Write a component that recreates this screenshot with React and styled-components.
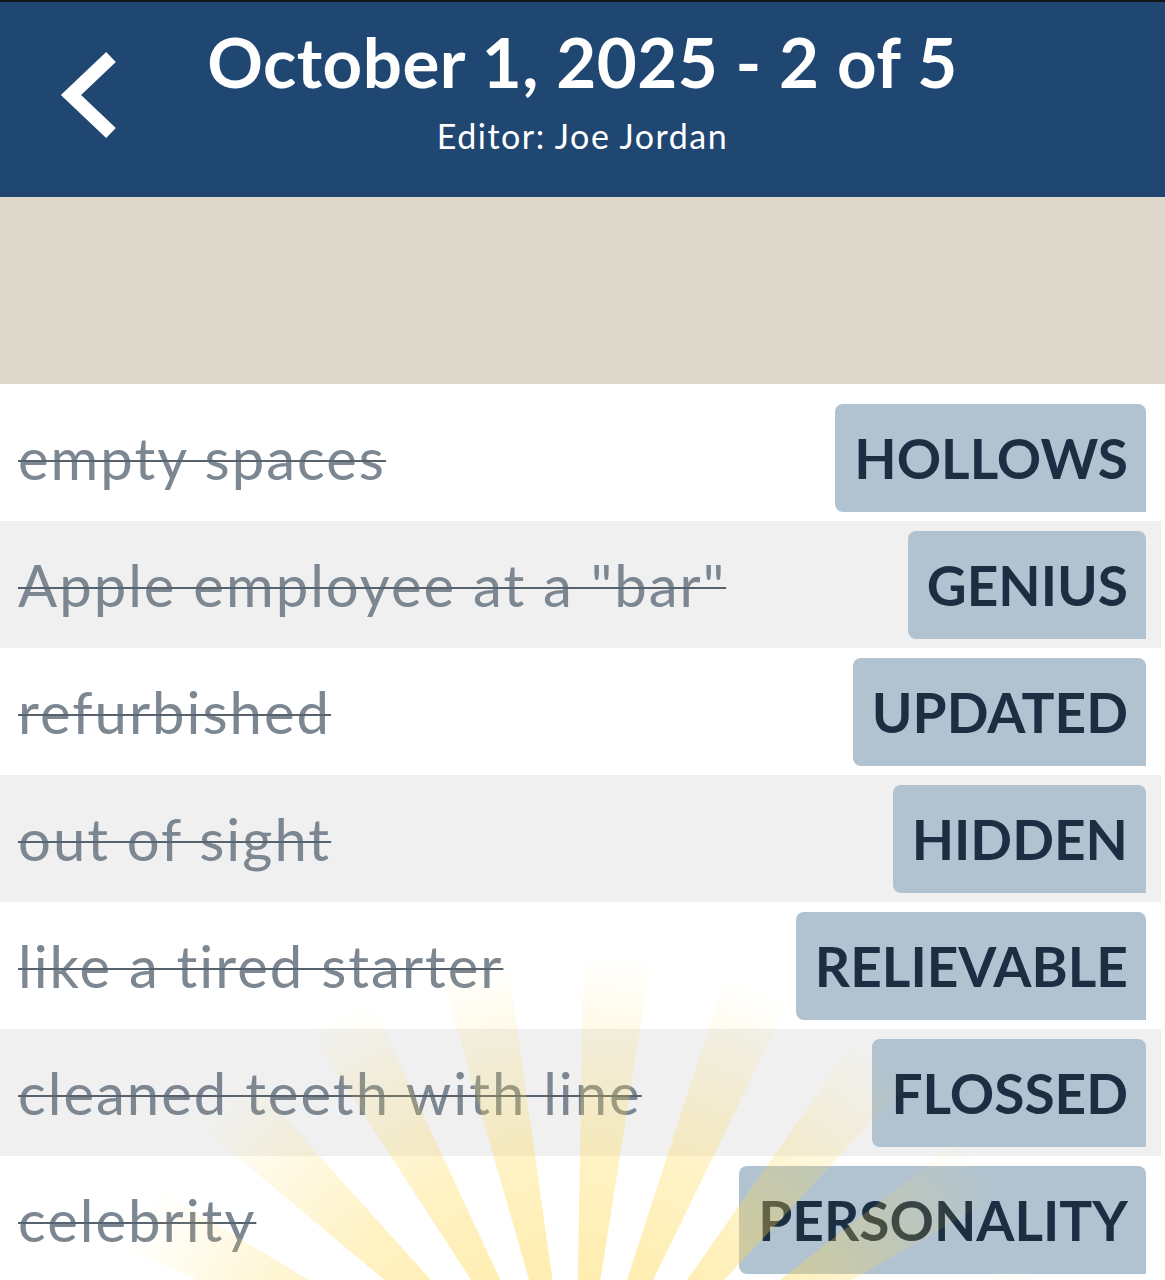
import React from "react";
import styled, { createGlobalStyle } from "styled-components";

const GlobalStyle = createGlobalStyle`
  html, body {
    margin: 0;
    padding: 0;
    background: #ffffff;
  }
  body {
    font-family: "Lato", "Noto Sans", sans-serif;
  }
`;

const Page = styled.main`
  position: relative;
  width: 1165px;
  height: 1280px;
  overflow: hidden;
  background: #ffffff;
`;

const Header = styled.header`
  display: grid;
  grid-template-columns: 1fr auto 1fr;
  align-items: start;
  height: 195px;
  border-top: 2px solid #141414;
  background: #1f4771;
  color: #ffffff;
`;

const BackButton = styled.button`
  justify-self: start;
  margin: 48px 0 0 58px;
  padding: 0;
  border: 0;
  background: none;
  cursor: pointer;
  line-height: 0;
`;

const TitleBlock = styled.div`
  display: flex;
  flex-direction: column;
  align-items: center;
`;

const Title = styled.h1`
  margin: 19px 0 0;
  font-size: 69px;
  font-weight: 700;
  line-height: 82px;
  letter-spacing: 0.5px;
`;

const Subtitle = styled.div`
  margin-top: 14px;
  font-size: 34px;
  font-weight: 400;
  line-height: 38px;
  letter-spacing: 1.5px;
`;

const Band = styled.div`
  height: 187px;
  background: #dfd8cc;
`;

const List = styled.ul`
  list-style: none;
  margin: 0;
  padding: 10px 4px 0 0;
`;

const Row = styled.li`
  display: flex;
  align-items: center;
  justify-content: space-between;
  height: 127px;
  padding: 0 15px 0 18px;
  box-sizing: border-box;
  background: ${(p) => (p.$shaded ? "#f0f0f0" : "#ffffff")};
`;

const Clue = styled.span`
  font-size: 58px;
  font-weight: 400;
  letter-spacing: 2px;
  color: #7c8792;
  text-decoration: line-through;
  text-decoration-color: #56626e;
  text-decoration-thickness: 2px;
  white-space: nowrap;
`;

const Answer = styled.span`
  display: flex;
  align-items: center;
  height: 108px;
  padding: 0 18px 0 19px;
  border-radius: 8px 8px 0 8px;
  background: #b1c3d0;
  color: #1b2e42;
  font-size: 55px;
  font-weight: 700;
`;

const Rays = styled.svg`
  position: absolute;
  left: 0;
  bottom: 0;
  width: 1165px;
  height: 420px;
  pointer-events: none;
`;

const entries = [
  ["empty spaces", "HOLLOWS"],
  ['Apple employee at a "bar"', "GENIUS"],
  ["refurbished", "UPDATED"],
  ["out of sight", "HIDDEN"],
  ["like a tired starter", "RELIEVABLE"],
  ["cleaned teeth with line", "FLOSSED"],
  ["celebrity", "PERSONALITY"],
];

// sunburst wedges fanning up from below the bottom edge
const CX = 575;
const CY = 580;
const rayPaths = (() => {
  const out = [];
  for (let a = -174; a <= -6; a += 17) {
    const a1 = (a * Math.PI) / 180;
    const a2 = ((a + 8) * Math.PI) / 180;
    const r = 900;
    out.push(
      `M${CX},${CY} L${CX + r * Math.cos(a1)},${CY + r * Math.sin(a1)} L${
        CX + r * Math.cos(a2)
      },${CY + r * Math.sin(a2)} Z`
    );
  }
  return out;
})();

const Sunburst = () => (
  <Rays viewBox="0 0 1165 420">
    <defs>
      <radialGradient id="rayFade" gradientUnits="userSpaceOnUse" cx={CX} cy={CY} r="490">
        <stop offset="0" stopColor="#ffd84d" stopOpacity="0.6" />
        <stop offset="0.6" stopColor="#ffd84d" stopOpacity="0.32" />
        <stop offset="1" stopColor="#ffd84d" stopOpacity="0" />
      </radialGradient>
    </defs>
    {rayPaths.map((d, i) => (
      <path key={i} d={d} fill="url(#rayFade)" />
    ))}
  </Rays>
);

const App = () => (
  <Page>
    <GlobalStyle />
    <Header>
      <BackButton aria-label="Back">
        <svg width="64" height="90" viewBox="0 0 64 90">
          <polyline
            points="53,7 13,45 53,83"
            fill="none"
            stroke="#ffffff"
            strokeWidth="14"
            strokeLinejoin="miter"
          />
        </svg>
      </BackButton>
      <TitleBlock>
        <Title>October 1, 2025 - 2 of 5</Title>
        <Subtitle>Editor: Joe Jordan</Subtitle>
      </TitleBlock>
      <div />
    </Header>
    <Band />
    <List>
      {entries.map(([clue, answer], i) => (
        <Row key={answer} $shaded={i % 2 === 1}>
          <Clue>{clue}</Clue>
          <Answer>{answer}</Answer>
        </Row>
      ))}
    </List>
    <Sunburst />
  </Page>
);

export default App;
